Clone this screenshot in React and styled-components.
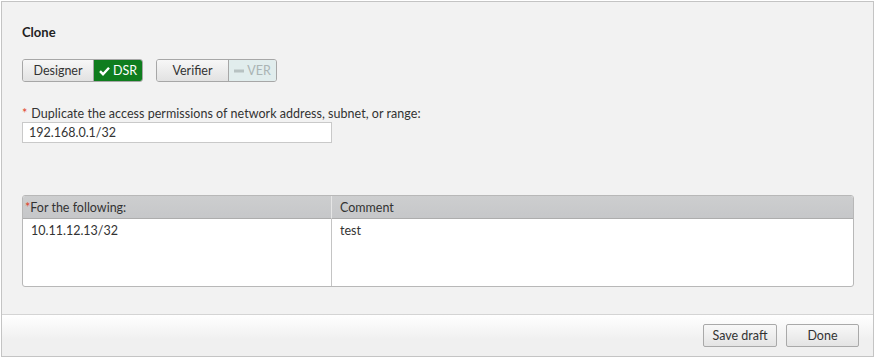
import React from "react"
import styled, { createGlobalStyle } from "styled-components"

const Global = createGlobalStyle`
  html, body {
    margin: 0;
    padding: 0;
    background: #ffffff;
    font-family: "Lato", "Open Sans", sans-serif;
    font-size: 12.5px;
    color: #222;
  }
`

const Panel = styled.div`
  box-sizing: border-box;
  width: 873px;
  height: 356px;
  margin: 1px 0 0 1px;
  border: 1px solid #c4c4c4;
  background: #f2f2f2;
  display: flex;
  flex-direction: column;
`

const Body = styled.div`
  flex: 1;
  padding: 22px 19px 0 20px;
`

const Title = styled.h2`
  margin: 0;
  font-size: 13px;
  font-weight: 700;
  color: #222;
  line-height: 16px;
`

const ToggleRow = styled.div`
  display: flex;
  gap: 13px;
  margin-top: 19px;
`

const ToggleGroup = styled.div`
  display: flex;
  height: 23px;
  box-sizing: border-box;
  border: 1px solid #a7a7a7;
  border-radius: 3px;
  overflow: hidden;
`

const ToggleBtn = styled.span`
  display: flex;
  align-items: center;
  justify-content: center;
  gap: 3px;
  width: ${p => p.$w}px;
  box-sizing: border-box;
  color: ${p => (p.$state === "on" ? "#fff" : p.$state === "off" ? "#aab4b4" : "#333")};
  background: ${p =>
    p.$state === "on"
      ? "#0f7d1e"
      : p.$state === "off"
      ? "#e1eded"
      : "linear-gradient(#f7f7f7, #e2e2e2)"};
  & + & {
    border-left: 1px solid #a7a7a7;
  }
`

const Field = styled.div`
  margin-top: 24px;
`

const Label = styled.div`
  display: flex;
  gap: 4px;
  line-height: 16px;
  letter-spacing: 0.04px;
  color: #333;
`

const Star = styled.span`
  color: #e2432a;
`

const Input = styled.div`
  box-sizing: border-box;
  width: 310px;
  height: 21px;
  padding: 0 6px;
  display: flex;
  align-items: center;
  background: #fff;
  border: 1px solid #c9c9c9;
  color: #333;
`

const Table = styled.div`
  box-sizing: border-box;
  margin-top: 52px;
  height: 92px;
  border: 1px solid #b8b8b8;
  border-radius: 3px;
  overflow: hidden;
  display: grid;
  grid-template-columns: 308px 1fr;
  grid-template-rows: 23px 1fr;
  background: #fff;
`

const Head = styled.div`
  display: flex;
  align-items: center;
  padding-left: ${p => p.$pad}px;
  background: linear-gradient(#cdcecf, #c6c7c9);
  border-bottom: 1px solid #adadad;
  color: #333;
  & + & {
    border-left: 1px solid #e6e6e6;
  }
`

const Cell = styled.div`
  padding: 4px 0 0 ${p => p.$pad}px;
  color: #333;
  & + & {
    border-left: 1px solid #c4c4c4;
  }
`

const Footer = styled.div`
  height: 41px;
  border-top: 1px solid #d4d4d4;
  background: linear-gradient(#ffffff, #f0f0f0 60%);
  display: flex;
  justify-content: flex-end;
  align-items: center;
  gap: 9px;
  padding-right: 14px;
`

const Button = styled.button`
  box-sizing: border-box;
  height: 23px;
  width: ${p => p.$w}px;
  border: 1px solid #a9a9a9;
  border-radius: 2px;
  background: linear-gradient(#f8f8f8, #e4e4e4);
  font-family: inherit;
  font-size: 12.5px;
  color: #333;
  padding: 0;
`

const Check = () => (
  <svg width="11" height="10" viewBox="0 0 11 10">
    <path d="M1 5.2 L4 8.2 L10 1.8" stroke="#fff" strokeWidth="2.4" fill="none" />
  </svg>
)

const Dash = () => (
  <svg width="10" height="4" viewBox="0 0 10 4">
    <rect x="0" y="0.5" width="10" height="3" fill="#b7c2c2" />
  </svg>
)

export default function App() {
  return (
    <>
      <Global />
      <Panel>
        <Body>
          <Title>Clone</Title>
          <ToggleRow>
            <ToggleGroup>
              <ToggleBtn $w={70}>Designer</ToggleBtn>
              <ToggleBtn $w={49} $state="on">
                <Check />
                DSR
              </ToggleBtn>
            </ToggleGroup>
            <ToggleGroup>
              <ToggleBtn $w={71}>Verifier</ToggleBtn>
              <ToggleBtn $w={48} $state="off">
                <Dash />
                VER
              </ToggleBtn>
            </ToggleGroup>
          </ToggleRow>
          <Field>
            <Label>
              <Star>*</Star>
              Duplicate the access permissions of network address, subnet, or range:
            </Label>
            <Input>192.168.0.1/32</Input>
          </Field>
          <Table>
            <Head $pad={2}>
              <Star>*</Star>For the following:
            </Head>
            <Head $pad={8}>Comment</Head>
            <Cell $pad={8}>10.11.12.13/32</Cell>
            <Cell $pad={8}>test</Cell>
          </Table>
        </Body>
        <Footer>
          <Button $w={74}>Save draft</Button>
          <Button $w={73}>Done</Button>
        </Footer>
      </Panel>
    </>
  )
}
